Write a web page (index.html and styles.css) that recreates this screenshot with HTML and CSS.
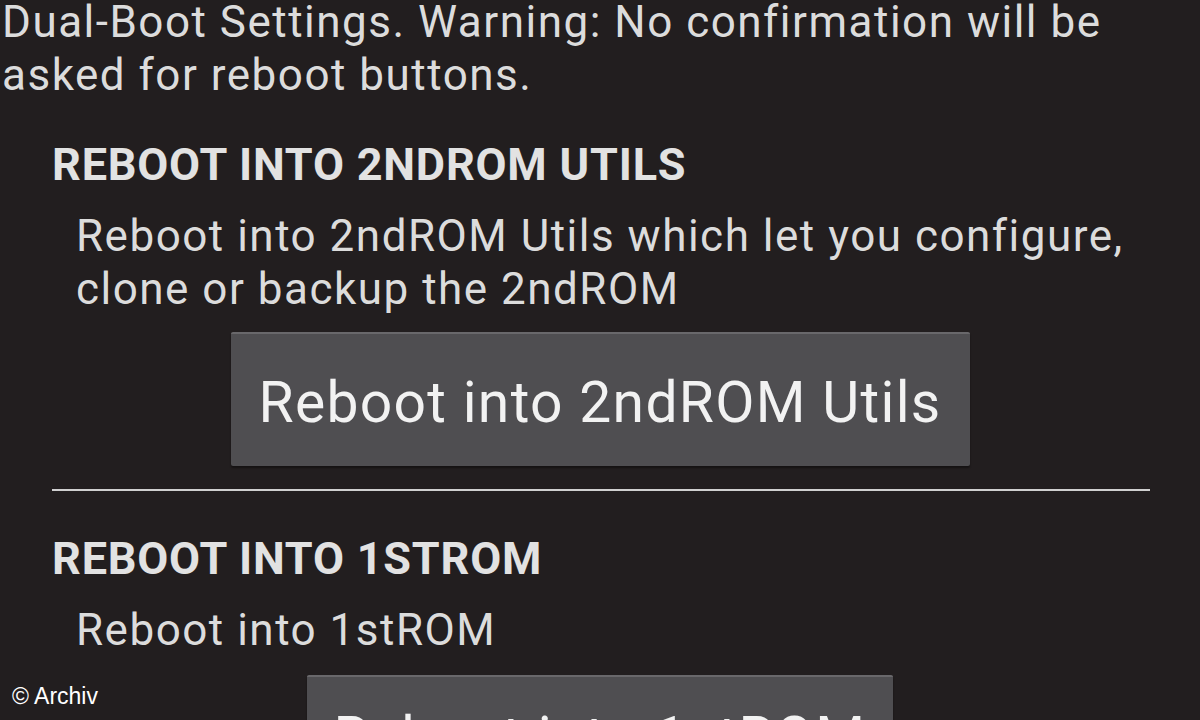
FILE: index.html
```html
<!DOCTYPE html>
<html>
<head>
    <title>Dual-Boot Settings</title>
    <link rel="stylesheet" href="styles.css">
</head>
<body>
    <div class="screen">
        <p class="intro">Dual-Boot Settings. Warning: No confirmation will be asked for reboot buttons.</p>

        <div class="section">
            <h2>REBOOT INTO 2NDROM UTILS</h2>
            <p class="summary">Reboot into 2ndROM Utils which let you configure, clone or backup the 2ndROM</p>
            <div class="action">
                <button type="button" class="wide">Reboot into 2ndROM Utils</button>
            </div>
        </div>

        <hr class="divider">

        <div class="section">
            <h2>REBOOT INTO 1STROM</h2>
            <p class="summary">Reboot into 1stROM</p>
            <div class="action">
                <button type="button" class="narrow">Reboot into 1stROM</button>
            </div>
        </div>
    </div>

    <div class="credit">&copy; Archiv</div>
</body>
</html>
```

FILE: styles.css
```css
body {
    margin: 0;
    background-color: #221e1f;
    color: #dcdcdc;
    font-family: Roboto, "Noto Sans", sans-serif;
    overflow: hidden;
    height: 720px;
}

.screen {
    width: 1198px;
    padding-left: 2px;
}

.intro {
    margin: -4px 0 0 0;
    font-size: 44px;
    line-height: 53px;
    width: 1190px;
    letter-spacing: 1.5px;
}

.section {
    padding-left: 50px;
}

h2 {
    margin: 36px 0 0 0;
    font-size: 45px;
    font-weight: bold;
    line-height: 53px;
    color: #e2e2e2;
    letter-spacing: 0.8px;
}

/* second block sits a little lower under the rule */
.divider + .section h2 {
    margin-top: 41px;
}

.summary {
    margin: 19px 0 0 0;
    padding-left: 24px;
    font-size: 44px;
    line-height: 53px;
    width: 1110px;
    letter-spacing: 1.5px;
}

.action {
    display: flex;
    justify-content: center;
    margin-top: 16px;
    padding-right: 52px;
}

.divider + .section .action {
    margin-top: 18px;
}

button {
    background-color: #4f4e51;
    color: #f2f2f2;
    border: none;
    border-top: 2px solid #69686b;
    border-radius: 2px;
    font-family: Roboto, "Noto Sans", sans-serif;
    font-size: 57px;
    letter-spacing: 1.3px;
    white-space: nowrap;
    height: 134px;
    padding: 5px 0 0 0;
    box-shadow: 0 2px 2px rgba(0, 0, 0, 0.4);
}

.wide {
    width: 739px;
}

.narrow {
    width: 586px;
    padding: 0 0 12px 0;
}

.divider {
    border: none;
    height: 2px;
    background-color: #d0d0d0;
    margin: 23px 0 0 50px;
    width: 1098px;
}

.credit {
    position: absolute;
    left: 12px;
    top: 683px;
    font-family: "Liberation Sans", Arial, sans-serif;
    font-size: 23px;
    color: #ffffff;
}
```
